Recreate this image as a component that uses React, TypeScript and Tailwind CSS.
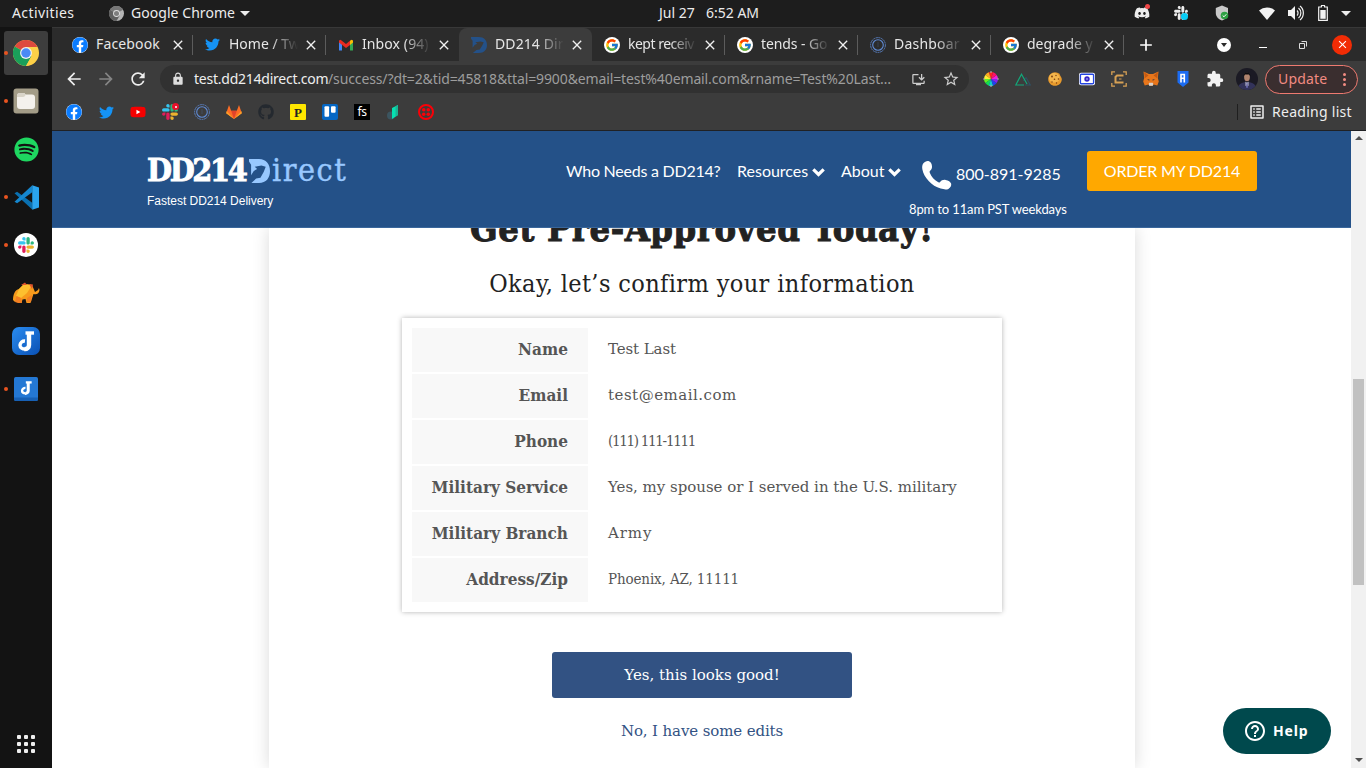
import React from "react";
import {
  FaFacebook, FaTwitter, FaYoutube, FaGithub, FaDiscord, FaSpotify,
} from "react-icons/fa";
import { FcGoogle } from "react-icons/fc";
import {
  MdArrowBack, MdArrowForward, MdRefresh, MdLock, MdStarBorder, MdExtension, MdClose, MdAdd, MdInstallDesktop, MdOutlineListAlt, MdHelpOutline,
} from "react-icons/md";

type P = { className?: string };

const Facebook = ({ className = "size-4" }: P) => (
  <span className={`block rounded-full bg-white ${className}`}>
    <FaFacebook className="size-full text-[#0a7cff]" />
  </span>
);

const Google = () => (
  <span className="flex size-4 items-center justify-center rounded-full bg-white">
    <FcGoogle className="size-[14px]" />
  </span>
);

const Chrome = ({ className }: P) => (
  <svg viewBox="0 0 48 48" className={className}>
    <circle cx="24" cy="24" r="24" fill="#fdd047" />
    <path d="M24 24 3.2 12A24 24 0 0 1 44.8 12Z" fill="#dd4a3e" />
    <path d="M24 24 3.2 12A24 24 0 0 0 24 48L34.4 30Z" fill="#1a9f5a" />
    <path d="M24 13h20.2A24 24 0 0 1 24 48L34 30Z" fill="#fdd047" />
    <circle cx="24" cy="24" r="11" fill="#f1f1f1" />
    <circle cx="24" cy="24" r="8.8" fill="#4a8af4" />
  </svg>
);

const ChromeGray = ({ className }: P) => (
  <svg viewBox="0 0 48 48" className={className}>
    <circle cx="24" cy="24" r="24" fill="#b5b5b5" />
    <path d="M24 24 3.2 12A24 24 0 0 1 44.8 12Z" fill="#777" />
    <path d="M24 24 3.2 12A24 24 0 0 0 24 48L34.4 30Z" fill="#5f5f5f" />
    <circle cx="24" cy="24" r="11" fill="#dcdcdc" />
    <circle cx="24" cy="24" r="8" fill="#7d7d7d" />
  </svg>
);

const Slack = ({ className, mono }: P & { mono?: boolean }) => (
  <svg viewBox="0 0 127 127" className={className}>
    <path fill={mono ? "#eee" : "#e01e5a"} d="M27.2 80c0 7.3-5.9 13.2-13.2 13.2C6.7 93.2.8 87.3.8 80c0-7.3 5.9-13.2 13.2-13.2h13.2V80zm6.6 0c0-7.3 5.9-13.2 13.2-13.2 7.3 0 13.2 5.9 13.2 13.2v33c0 7.3-5.9 13.2-13.2 13.2-7.3 0-13.2-5.9-13.2-13.2V80z" />
    <path fill={mono ? "#eee" : "#36c5f0"} d="M47 27c-7.3 0-13.2-5.9-13.2-13.2C33.8 6.5 39.7.6 47 .6c7.3 0 13.2 5.9 13.2 13.2V27H47zm0 6.7c7.3 0 13.2 5.9 13.2 13.2 0 7.3-5.9 13.2-13.2 13.2H13.9C6.6 60.1.7 54.2.7 46.9c0-7.3 5.9-13.2 13.2-13.2H47z" />
    <path fill={mono ? "#eee" : "#2eb67d"} d="M99.9 46.9c0-7.3 5.9-13.2 13.2-13.2 7.3 0 13.2 5.9 13.2 13.2 0 7.3-5.9 13.2-13.2 13.2H99.9V46.9zm-6.6 0c0 7.3-5.9 13.2-13.2 13.2-7.3 0-13.2-5.9-13.2-13.2V13.8C66.9 6.5 72.8.6 80.1.6c7.3 0 13.2 5.9 13.2 13.2v33.1z" />
    <path fill={mono ? "#eee" : "#ecb22e"} d="M80.1 99.8c7.3 0 13.2 5.9 13.2 13.2 0 7.3-5.9 13.2-13.2 13.2-7.3 0-13.2-5.9-13.2-13.2V99.8h13.2zm0-6.6c-7.3 0-13.2-5.9-13.2-13.2 0-7.3 5.9-13.2 13.2-13.2h33.1c7.3 0 13.2 5.9 13.2 13.2 0 7.3-5.9 13.2-13.2 13.2H80.1z" />
  </svg>
);

const Gmail = () => (
  <svg viewBox="0 0 16 16" className="size-4">
    <path d="M1 4v9.5h3V6.5Z" fill="#4285f4" />
    <path d="M15 4v9.5h-3V6.5Z" fill="#34a853" />
    <path d="M12 3.8 13.5 2.7 15 3.5v2l-3 2.500Z" fill="#fbbc04" />
    <path d="M1 3.500 2.500 2.700 8 7l4-3.200v4.200L8 11 1 5.500Z" fill="#ea2a20" />
  </svg>
);

const Eagle = ({ className, fill }: { className: string; fill: string }) => (
  <svg viewBox="0 0 22 24" preserveAspectRatio="none" className={className}>
    <path d="M0 0h10.500C18 0 22 5 22 12s-4 12-11.500 12H2.500L7.500 19.500 12 18.800l3.500-6 2-5L13 6.600 6 7.800 8.500 10 5 12l-2.800 4.200V5.800L0 2.500Z" fill={fill} />
  </svg>
);

const Rings = () => (
  <svg viewBox="0 0 16 16" className="size-4" fill="none" stroke="#5f8ad4">
    <circle cx="8" cy="8" r="7.4" strokeWidth=".8" strokeDasharray="2 .5" />
    <circle cx="8" cy="8" r="5.3" strokeWidth="1.1" />
    <path d="M8 5v5" strokeWidth=".6" opacity=".4" />
  </svg>
);

const Twilio = () => (
  <svg viewBox="0 0 16 16" className="size-4">
    <circle cx="8" cy="8" r="7" fill="none" stroke="#fb0007" strokeWidth="2" />
    {[5.7, 10.3].map((x) => [5.7, 10.3].map((y) => <circle key={`${x}-${y}`} cx={x} cy={y} r="1.8" fill="#fb0007" />))}
  </svg>
);

const VsCode = () => (
  <svg viewBox="0 0 24 24" className="size-[25px]">
    <path d="M.5 8 3 6.500 17.500 17v6.500L.5 8Z" fill="#0a70b0" />
    <path d="M.5 16 17.500.3v6.700L3 17.500Z" fill="#1587cf" />
    <path d="M17.500.2 24 2.500v19l-6.500 2.300Z" fill="#2aa4ee" />
  </svg>
);

const Elephant = () => (
  <svg viewBox="0 0 28 22" className="h-[22px] w-7">
    <path d="M1 18c0-6 2-10 6-11L12 2l8 1 3 7 3-2 1-2 .5 2c-.5 4-3 5-6 4l-1 3-2 6h-4l-1-4-3 .5L9.500 21H6l-.5-4L3 20Z" fill="#f79a1c" />
    <path d="m7 7 5-5 8 1-5 8-6 5-5-2Z" fill="#fdc02f" />
    <path d="m9 3 4-2.500L15 3ZM17 2l4 .5L20 7Z" fill="#e0542b" />
    <path d="m3 20 1.500-6L9 16l1 5H6Zm12-4 5-3-1 7h-4Z" fill="#f37f22" />
  </svg>
);

const Joplin = ({ small }: { small?: boolean }) => (
  <svg viewBox="0 0 28 28" className={small ? "size-6" : "size-7"}>
    <defs>
      <linearGradient id="jop" x1="0" y1="0" x2="1" y2="1">
        <stop offset="0" stopColor="#2a8cf0" />
        <stop offset="1" stopColor="#0a50b4" />
      </linearGradient>
    </defs>
    <rect width="28" height="28" rx={small ? 2 : 7} fill={small ? "#2478d4" : "url(#jop)"} />
    {small && <path d="M0 24h28v2a2 2 0 0 1-2 2H2a2 2 0 0 1-2-2Z" fill="#1760b4" />}
    <g fill="none" stroke="#fff" transform={small ? "translate(3 1.500) scale(.8)" : undefined}>
      <path d="M17 7v11a4 4 0 0 1-4.500 4" strokeWidth="4.400" />
      <path d="M13.500 6h8.500" strokeWidth="3.400" />
      <path d="M13 14a4.500 4.500 0 0 0-5 4.200C8 20.600 10.500 22 13 22" strokeWidth="3.400" />
    </g>
  </svg>
);

const Files = () => (
  <svg viewBox="0 0 26 26" className="size-[26px]">
    <rect x=".5" y=".5" width="25" height="25" rx="3" fill="#a39c87" />
    <path d="M4 8a3 3 0 0 1 3-3h3.500a2 2 0 0 1 2 1.500h6.500a3 3 0 0 1 3 3V18a3 3 0 0 1-3 3H7a3 3 0 0 1-3-3Z" fill="#f4f1ec" />
    <path d="M4 9V8a3 3 0 0 1 3-3h3.500a2 2 0 0 1 2 1.500c0 1.500-1 2.500-2.500 2.500Z" fill="#d9d4c8" />
  </svg>
);

const Handset = () => (
  <svg viewBox="0 0 30 30" className="size-[30px]">
    <path d="M1.200 3.500C2.600 1.400 5 .6 6.500 1c2 .5 3.300 2.600 3.500 5.200.2 2.300-.8 3.600-1.900 4.500-.6.500-.6 1.300-.2 2.200 1.500 3.600 4.400 7 8 9.200.9.500 1.600.4 2.200-.2 1.300-1.400 3-2.400 5.500-2 2.800.4 5 2 5.500 3.700.6 2-.6 4.300-2.700 5.300-1.800.8-4.700.6-7.700-.3C9.700 26 1.800 17.500.4 9.500 0 7 .1 5.100 1.200 3.500Z" fill="#fff" />
  </svg>
);

const Chevron = () => (
  <svg viewBox="0 0 13 9" className="mt-[9px] h-[9px] w-[13px]" fill="none" stroke="#fff" strokeWidth="3.2">
    <path d="M1.300 1.300 6.500 6.400l5.200-5.100" />
  </svg>
);

const dock: { icon: React.ReactNode; dot?: boolean; active?: boolean }[] = [
  { icon: <Chrome className="size-[26px]" />, dot: true, active: true },
  { icon: <Files />, dot: true },
  { icon: <FaSpotify className="size-[25px] text-[#1ed760]" /> },
  { icon: <VsCode />, dot: true },
  { icon: <span className="flex size-6 items-center justify-center rounded-full bg-white"><Slack className="size-4" /></span>, dot: true },
  { icon: <Elephant /> },
  { icon: <Joplin /> },
  { icon: <Joplin small />, dot: true },
];

const tabs: { icon: React.ReactNode; title: string; track: string; fade?: boolean; active?: boolean }[] = [
  { icon: <Facebook />, title: "Facebook", track: "tracking-[0.15px]" },
  { icon: <FaTwitter className="mr-px size-[15px] text-[#1593f5]" />, title: "Home / Tw", track: "tracking-[0px]", fade: true },
  { icon: <Gmail />, title: "Inbox (94)", track: "tracking-[0.1px]", fade: true },
  { icon: <Eagle className="size-4" fill="#245188" />, title: "DD214 Dir", track: "tracking-[0.1px]", fade: true, active: true },
  { icon: <Google />, title: "kept receiv", track: "tracking-[-0.5px]", fade: true },
  { icon: <Google />, title: "tends - Go", track: "tracking-[-0.1px]", fade: true },
  { icon: <Rings />, title: "Dashboar", track: "tracking-[0.2px]", fade: true },
  { icon: <Google />, title: "degrade y", track: "tracking-[0px]", fade: true },
];

const bookmarks: React.ReactNode[] = [
  <Facebook />,
  <FaTwitter className="size-[15px] text-[#1593f5]" />,
  <span className="relative block size-4">
    <span className="absolute inset-x-1 inset-y-1 bg-white" />
    <FaYoutube className="relative size-4 text-[#f60000]" />
  </span>,
  <span className="relative block size-4">
    <Slack className="size-4" />
    <span className="absolute -top-px -right-px flex size-[7px] items-center justify-center rounded-full bg-[#e8102a]">
      <span className="size-[2px] rounded-full bg-white" />
    </span>
  </span>,
  <Rings />,
  <svg viewBox="0 0 16 16" className="size-4">
    <path d="M3 1 .2 9.200 8 15l7.800-5.800L13 1l-2.200 5.800H5.200Z" fill="#fc6d26" />
    <path d="M5.200 6.800h5.600L8 15Z" fill="#e24329" />
    <path d="M.7 7 .2 9.200 8 15Zm14.600 0 .5 2.200L8 15Z" fill="#fca326" />
  </svg>,
  <FaGithub className="size-4 text-[#24292f]" />,
  <span className="flex size-4 items-center justify-center rounded-[1px] bg-[#ffe600] font-['Liberation_Serif',serif] text-[13px] leading-none font-bold text-[#222]">P</span>,
  <svg viewBox="0 0 16 16" className="size-4">
    <rect width="16" height="16" rx="2" fill="#0567c4" />
    <rect x="2.500" y="2.300" width="4.600" height="10.500" rx="1" fill="#fff" />
    <rect x="9" y="2.300" width="4.600" height="6.500" rx="1" fill="#fff" />
  </svg>,
  <span className="flex size-4 items-center justify-center bg-black text-[12px] leading-[14px] tracking-[-0.5px] text-white">fs</span>,
  <svg viewBox="0 0 16 16" className="size-4">
    <circle cx="5" cy="11.500" r="4" fill="#3c5560" />
    <path d="M6 4 12 1v10l-6 4Z" fill="#06e0b2" />
    <path d="M9.500 2.200 12 1v10l-2.500 1.700Z" fill="#1ab394" />
  </svg>,
  <Twilio />,
];

const wheel = ["#f22", "#fa2", "#fe3", "#6e2", "#1d5", "#1cc", "#24e", "#82e", "#e2d", "#f16"];

const extensions: React.ReactNode[] = [
  <svg viewBox="-8 -8 16 16" className="size-4">
    {wheel.map((c, i) => (
      <path key={c} d="M0 0 0 -7A7 7 0 0 1 4.110 -5.660Z" fill={c} transform={`rotate(${i * -36 - 18})`} />
    ))}
    <path d="M0-8v2M0 6v2M-8 0h2M6 0h2" stroke="#aaa" strokeWidth="1.2" />
  </svg>,
  <svg viewBox="0 0 16 16" className="size-4" fill="none" strokeWidth="1.2">
    <path d="M10 14h5.300L11 6.500 8.500 10" stroke="#2f5063" />
    <path d="M9 14H.8L6.500 3.200 12 13" stroke="#12a87a" />
  </svg>,
  <svg viewBox="0 0 16 16" className="size-4">
    <path d="M8 1.200c2 0 3 1 4.500 1.500.2 1.800 2 2.800 2.300 5.300 0 4-3 6.800-6.800 6.800S1.200 11.800 1.200 8 4.500 1.200 8 1.200Z" fill="#e89a2c" />
    <path d="M7 2c2 0 5 1.500 5.500 4s-1 5-4.500 5.500S2 9.500 2 7s2.500-5 5-5Z" fill="#f5b64c" />
    <g fill="#7a3d10">
      <circle cx="5" cy="5.500" r=".9" /><circle cx="9" cy="4.500" r=".7" /><circle cx="7.500" cy="8.200" r=".8" /><circle cx="11.500" cy="8" r=".8" /><circle cx="5" cy="11" r=".7" /><circle cx="9.500" cy="12" r=".7" />
    </g>
  </svg>,
  <svg viewBox="0 0 16 16" className="size-4">
    <rect y="1.800" width="16" height="12.400" rx="2" fill="#fff" />
    <rect x="1.400" y="3.200" width="13.200" height="9.600" rx="1" fill="#fff" stroke="#2445e0" strokeWidth="1.4" />
    <circle cx="8" cy="8" r="2.700" fill="#3726c8" />
    <circle cx="8" cy="8" r=".7" fill="#fff" />
  </svg>,
  <svg viewBox="0 0 16 16" className="size-4" fill="none" stroke="#d6a054">
    <path d="M.8 4V.8H4M12 .8h3.200V4M15.200 12v3.200H12M4 15.200H.8V12" strokeWidth="1.3" />
    <path d="M12.500 4.500H6L4.500 6v5.500h8" strokeWidth="2" />
    <path d="M10.500 8H8" strokeWidth="1" />
  </svg>,
  <svg viewBox="0 0 16 16" className="size-4">
    <path d="M.5.5 6 3h4L15.500.5 14.800 7l1 3.500-1.500 4-3.800-1-1 1.200h-3l-1-1.200-3.800 1-1.500-4 1-3.500Z" fill="#e8761b" />
    <path d="m1 1 4.500 3.500L2 7ZM15 1l-4.500 3.500L14 7Z" fill="#c35a14" />
    <path d="m5.700 13 .5-1.200h3.600l.5 1.200-.5 1.800H6.200Z" fill="#d8d0c8" />
    <path d="m4 8.200 2.500.3-.3 1.300ZM12 8.200l-2.500.3.3 1.300Z" fill="#2b3440" />
  </svg>,
  <svg viewBox="0 0 16 16" className="size-4">
    <path d="M2.500 0h11v11.500L8 16l-5.500-4.500Z" fill="#1c6cf2" />
    <path d="M6 11.500V3.500h3.300v3.800H6M9.300 7.300v4.200" fill="none" stroke="#fff" strokeWidth="1.6" />
  </svg>,
  <MdExtension className="size-[18px] text-[#f2f2f2]" />,
];

function TopBar() {
  return (
    <div className="flex h-[27px] shrink-0 items-center bg-[#1d1d1d] pb-px text-[#ececec]">
      <span className="ml-3 w-[62px] tracking-[0.4px]">Activities</span>
      <ChromeGray className="ml-[35px] size-[15px]" />
      <span className="ml-[7px] w-[104px] tracking-[0.05px] whitespace-nowrap">Google Chrome</span>
      <span className="ml-[5px] border-x-[5px] border-t-[5px] border-x-transparent border-t-[#ececec]" />
      <span className="ml-[409px] w-[37px] whitespace-nowrap">Jul 27</span>
      <span className="ml-[10px] w-[55px] whitespace-nowrap">6:52 AM</span>
      <div className="relative ml-[373px]">
        <FaDiscord className="size-4" />
        <span className="absolute -top-px right-0 size-[5px] rounded-full bg-[#f04747]" />
      </div>
      <div className="relative ml-6">
        <Slack mono className="size-[14px]" />
        <span className="absolute right-0 bottom-0 size-[7px] rounded-full bg-[#08cdf5]" />
      </div>
      <svg viewBox="0 0 14 16" className="ml-[27px] h-4 w-[14px]">
        <path d="M7 .5 13 3v5c0 4-3 6.500-6 7.500C4 14.500.8 12 .8 8V3Z" fill="#c9c9c9" />
        <circle cx="9.500" cy="10.500" r="3.800" fill="#2ea043" />
        <path d="m7.700 10.500 1.300 1.300 2.300-2.500" stroke="#fff" fill="none" />
      </svg>
      <svg viewBox="0 0 16 13" className="ml-[30px] h-[13px] w-4"><path d="M0 3.500a12 12 0 0 1 16 0L8 13Z" fill="#f2f2f2" /></svg>
      <svg viewBox="0 0 16 16" className="ml-[13px] size-4">
        <path d="M0 5h3l4-4v14l-4-4H0Z" fill="#f2f2f2" />
        <path d="M9 5.500a3.500 3.500 0 0 1 0 5M10.500 3a6.500 6.500 0 0 1 0 10M12 1a9 9 0 0 1 0 14" stroke="#f2f2f2" fill="none" strokeWidth="1.2" />
      </svg>
      <svg viewBox="0 0 10 16" className="ml-3.5 h-4 w-2.5">
        <path d="M3.500.5h3V2H9.300v13.300H.7V2h2.800Z" fill="none" stroke="#f2f2f2" strokeWidth="1.2" />
        <path d="M2.300 5h5.400v8.800H2.300Z" fill="#f2f2f2" />
      </svg>
      <span className="ml-[13px] border-x-[5px] border-t-[5px] border-x-transparent border-t-[#ececec]" />
    </div>
  );
}

function Dock() {
  return (
    <div className="flex w-[52px] shrink-0 flex-col bg-[#131313] pt-0.5">
      {dock.map((d, i) => (
        <div key={i} className="relative flex h-12 items-center justify-center">
          {d.active && <span className="absolute inset-x-1 inset-y-0.5 rounded-[3px] bg-[#3d3d3d]" />}
          {d.dot && <span className="absolute left-1 size-1 rounded-full bg-[#e95420]" />}
          <span className="relative">{d.icon}</span>
        </div>
      ))}
      <div className="mt-auto mb-[15px] ml-[17px] grid w-[18px] grid-cols-3 gap-[3px]">
        {Array.from({ length: 9 }, (_, i) => <span key={i} className="size-1 rounded-[1px] bg-[#eee]" />)}
      </div>
    </div>
  );
}

function TabStrip() {
  return (
    <div className="flex h-[34px] items-stretch border-t border-[#383838] bg-[#2b2b2b] pl-2 text-[#e6e6e6]">
      {tabs.map((t, i) => (
        <div key={i} className={`flex w-[133px] shrink-0 items-center pl-3 ${t.active ? "rounded-t-lg bg-[#3c3c3c]" : ""}`}>
          {t.icon}
          <div className={`mb-0.5 ml-2 w-[69px] shrink-0 whitespace-nowrap ${t.track} ${t.fade ? "[mask-image:linear-gradient(to_right,black_60%,transparent)]" : ""}`}>
            {t.title}
          </div>
          <MdClose className="ml-[5px] size-4 shrink-0 text-[#f0f0f0]" />
          <span className={`ml-auto h-5 w-px ${t.active || i === 2 ? "" : "bg-[#5c5c5c]"}`} />
        </div>
      ))}
      <div className="flex items-center">
        <MdAdd className="ml-3 size-5 text-white" />
        <span className="ml-[61px] flex size-[14px] items-center justify-center rounded-full bg-white">
          <span className="border-x-[3.5px] border-t-[4px] border-x-transparent border-t-[#2b2b2b]" />
        </span>
        <span className="mt-[5px] ml-7 h-px w-2 bg-white" />
        <svg viewBox="0 0 8 8" className="ml-8 size-2" fill="none" stroke="#ddd"><path d="M.5 2.500h5v5h-5ZM2.500.5h5v5" /></svg>
        <span className="ml-[25px] flex size-5 items-center justify-center rounded-full bg-[#f22c05]">
          <MdClose className="size-[13px] text-white" />
        </span>
      </div>
    </div>
  );
}

function Toolbar() {
  return (
    <div className="flex h-9 items-center pl-3 text-[#eee]">
      <MdArrowBack className="size-5" />
      <MdArrowForward className="ml-3 size-5 text-[#858585]" />
      <MdRefresh className="ml-3 size-5" />
      <div className="ml-3 flex h-7 w-[809px] items-center rounded-full bg-[#313131] pl-[11px]">
        <MdLock className="size-[14px] text-[#ddd]" />
        <span className="ml-[9px] w-[134px] tracking-[-0.24px] whitespace-nowrap">test.dd214direct.com</span>
        <span className="w-[565px] tracking-[-0.12px] whitespace-nowrap text-[#9d9d9d]">/success/?dt=2&amp;tid=45818&amp;ttal=9900&amp;email=test%40email.com&amp;rname=Test%20Last…</span>
        <MdInstallDesktop className="ml-[18px] size-[15px] text-[#ccc]" />
        <MdStarBorder className="ml-4 size-[18px] text-[#ccc]" />
      </div>
      <div className="ml-1.5 flex">
        {extensions.map((e, i) => <span key={i} className="flex w-8 items-center justify-center">{e}</span>)}
      </div>
      <svg viewBox="0 0 22 22" className="ml-[5px] size-[22px]">
        <defs><clipPath id="face"><circle cx="11" cy="11" r="11" /></clipPath></defs>
        <g clipPath="url(#face)">
          <rect width="22" height="22" fill="#1b1a24" />
          <path d="M1 22c1-6 5-8 10-8s9 2 10 8Z" fill="#33335a" />
          <path d="m9.500 13.500 1.500 1.500 1.500-1.500v4L11 20l-1.500-2.500Z" fill="#c8c8d8" />
          <path d="M10.600 15h.9l.5 5h-2Z" fill="#54549a" />
          <ellipse cx="11" cy="9" rx="2.900" ry="4.200" fill="#b0836e" />
          <path d="M7.500 8.500c0-5.500 7-5.500 7 0l-1.500-2h-4Z" fill="#0c0c10" />
        </g>
      </svg>
      <div className="ml-[7px] flex h-[29px] w-[93px] items-center rounded-full border border-[#ee7a70] bg-[#3a2e2f] pl-3 text-[#f28b82]">
        <span className="w-[50px] tracking-[0.2px]">Update</span>
        <span className="ml-[15px] flex flex-col gap-[2px]">
          <span className="size-[3px] rounded-full bg-[#f28b82]" />
          <span className="size-[3px] rounded-full bg-[#f28b82]" />
          <span className="size-[3px] rounded-full bg-[#f28b82]" />
        </span>
      </div>
    </div>
  );
}

function Bookmarks() {
  return (
    <div className="flex h-[34px] items-center border-b border-[#202124] pb-[3px] pl-1.5 text-[#eee]">
      {bookmarks.map((b, i) => <span key={i} className="flex w-8 items-center justify-center">{b}</span>)}
      <span className="ml-auto h-4 w-px bg-[#1f1f1f]" />
      <MdOutlineListAlt className="ml-2.5 size-[18px]" />
      <span className="mr-[13px] ml-[6px] w-[81px] tracking-[0.28px] whitespace-nowrap">Reading list</span>
    </div>
  );
}

function SiteHeader() {
  return (
    <header className="relative z-10 flex h-[97px] items-start border-b border-[#3a679c] bg-[#245188] text-white">
      <div className="ml-[95px] w-[201px] pt-[20px]">
        <div className="flex h-[38px] items-center font-['DejaVu_Serif_Condensed','DejaVu_Serif',serif] text-[32px] leading-[38px]">
          <span className="w-[102px] font-bold tracking-[-2.3px] [-webkit-text-stroke:0.9px_white]">DD214</span>
          <Eagle className="mt-px h-6 w-[21px]" fill="#98c8ff" />
          <span className="ml-0.5 tracking-[1.5px] text-[#98c8ff] [-webkit-text-stroke:0.4px_#98c8ff]">irect</span>
        </div>
        <div className="mt-[3px] font-['Liberation_Sans',sans-serif] text-[12px] leading-[18px] tracking-[-0.02px] whitespace-nowrap">Fastest DD214 Delivery</div>
      </div>
      <nav className="ml-[218px] flex pt-[28px] font-['Lato',sans-serif] text-[16px] leading-[24px] whitespace-nowrap">
        <span className="w-[155px] tracking-[-0.24px]">Who Needs a DD214?</span>
        <span className="ml-4 w-[75px]">Resources</span>
        <Chevron />
        <span className="ml-4 w-[47px]">About</span>
        <Chevron />
      </nav>
      <div className="ml-[8px] flex w-[159px] flex-col pt-[29px] font-['Lato',sans-serif] whitespace-nowrap">
        <div className="flex items-center pl-[13px]">
          <Handset />
          <span className="mb-0.5 ml-[4px] text-[16px] leading-[28px]">800-891-9285</span>
        </div>
        <span className="mt-[9px] text-[13px] leading-[20px] tracking-[-0.13px]">8pm to 11am PST weekdays</span>
      </div>
      <button className="mt-5 ml-[19px] h-10 w-[170px] rounded-[3px] bg-[#ffa800] font-['Lato',sans-serif] text-[16px] tracking-[-0.18px] whitespace-nowrap">ORDER MY DD214</button>
    </header>
  );
}

const details: [string, string, string][] = [
  ["Name", "Test Last", "tracking-[-0.1px]"],
  ["Email", "test@email.com", "tracking-[0.5px]"],
  ["Phone", "(111) 111-1111", "font-['DejaVu_Serif_Condensed','DejaVu_Serif',serif] tracking-[-1.3px]"],
  ["Military Service", "Yes, my spouse or I served in the U.S. military", "tracking-[-0.02px]"],
  ["Military Branch", "Army", "tracking-[0.9px]"],
  ["Address/Zip", "Phoenix, AZ, 11111", "font-['DejaVu_Serif_Condensed','DejaVu_Serif',serif] tracking-[-0.13px]"],
];

function Confirmation() {
  return (
    <section className="ml-[217px] flex h-[540px] w-[866px] flex-col items-center bg-white font-['DejaVu_Serif',serif] whitespace-nowrap shadow-[0_0_16px_rgba(0,0,0,0.15)]">
      <h1 className="-mt-5 font-['DejaVu_Serif_Condensed','DejaVu_Serif',serif] text-[36px] leading-[40px] font-bold tracking-[0.57px] text-[#222] [-webkit-text-stroke:0.9px_#222]">Get Pre-Approved Today!</h1>
      <h2 className="mt-[20px] font-['DejaVu_Serif_Condensed','DejaVu_Serif',serif] text-[25px] leading-[32px] tracking-[0.38px] text-[#222]">Okay, let’s confirm your information</h2>
      <div className="mt-[18px] flex w-[600px] flex-col gap-0.5 bg-white p-2.5 text-[15px] text-[#555] shadow-[0_0_5px_rgba(0,0,0,0.3)]">
        {details.map(([k, v, track]) => (
          <div key={k} className="flex h-11 items-center">
            <div className="flex h-11 w-44 items-center justify-end bg-[#f8f8f8] pr-5 pb-0.5 font-['DejaVu_Serif_Condensed','DejaVu_Serif',serif] text-[17px] font-bold tracking-[0.02px]">{k}</div>
            <div className={`pb-0.5 pl-5 ${track}`}>{v}</div>
          </div>
        ))}
      </div>
      <button className="mt-10 h-[46px] w-[300px] rounded-[3px] bg-[#325283] text-[15px] text-white">Yes, this looks good!</button>
      <a className="mt-[21px] text-[15px] leading-[24px] tracking-[-0.12px] text-[#325283]">No, I have some edits</a>
    </section>
  );
}

export default function App() {
  return (
    <div className="flex h-[768px] w-[1366px] flex-col overflow-hidden font-['Noto_Sans',sans-serif] text-[14px] leading-[20px]">
      <TopBar />
      <div className="flex h-[741px]">
        <Dock />
        <div className="flex flex-1 flex-col bg-[#3c3c3c]">
          <TabStrip />
          <Toolbar />
          <Bookmarks />
          <div className="relative flex h-[637px] overflow-hidden bg-white">
            <div className="flex w-[1299px] flex-col">
              <SiteHeader />
              <main className="h-[540px] overflow-hidden bg-white"><div className="flow-root"><Confirmation /></div></main>
            </div>
            <div className="flex w-[15px] flex-col items-center bg-[#f1f1f1]">
              <span className="mt-[5px] border-x-4 border-b-4 border-x-transparent border-b-[#505050]" />
              <span className="mt-[239px] h-[206px] w-[11px] bg-[#c1c1c1]" />
              <span className="mt-auto mb-[6px] border-x-4 border-t-4 border-x-transparent border-t-[#505050]" />
            </div>
            <button className="absolute right-[35px] bottom-[14px] flex h-[46px] w-[108px] items-center rounded-full bg-[#00494d] pl-5 font-bold text-white">
              <MdHelpOutline className="size-6" />
              <span className="ml-[6px] text-[14px] tracking-[0.8px]">Help</span>
            </button>
          </div>
        </div>
      </div>
    </div>
  );
}
